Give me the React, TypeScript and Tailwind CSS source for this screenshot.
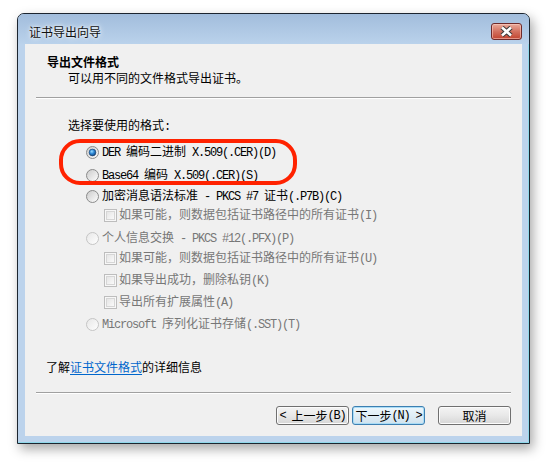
import { useId } from "react";

const ASCII = /^[\x20-\x7e]+$/;

// SimSun-like mix: Latin runs in a narrow mono, CJK in Noto
function Txt({ children }: { children: string }) {
  const parts = children.split(/([\x20-\x7e]+)/).filter(Boolean);
  return (
    <>
      {parts.map((p, i) =>
        ASCII.test(p) ? (
          <span key={i} className="font-['Liberation_Mono',monospace] tracking-[-1.2px] whitespace-pre">
            {p}
          </span>
        ) : (
          <span key={i}>{p}</span>
        ),
      )}
    </>
  );
}

function Radio({ checked, disabled }: { checked?: boolean; disabled?: boolean }) {
  const id = useId().replace(/[^a-zA-Z0-9]/g, "");
  return (
    <svg width="13" height="13" viewBox="0 0 13 13" className="shrink-0">
      <defs>
        <linearGradient id={`${id}f`} x1="0" y1="0" x2="1" y2="1">
          <stop offset="0" stopColor={disabled ? "#e6e6e6" : "#c9c9c9"} />
          <stop offset="1" stopColor="#ffffff" />
        </linearGradient>
        <radialGradient id={`${id}d`} cx="0.4" cy="0.35" r="0.75">
          <stop offset="0" stopColor="#9adcff" />
          <stop offset="0.45" stopColor="#2b86d6" />
          <stop offset="1" stopColor="#0b3568" />
        </radialGradient>
      </defs>
      <circle cx="6.5" cy="6.5" r="6" fill={`url(#${id}f)`} stroke={disabled ? "#c4c4c4" : "#8a8b8b"} />
      {checked && <circle cx="6.5" cy="6.5" r="3.4" fill={`url(#${id}d)`} stroke="#1b3f6b" strokeWidth="0.6" />}
    </svg>
  );
}

function Check({ disabled }: { disabled?: boolean }) {
  const id = useId().replace(/[^a-zA-Z0-9]/g, "");
  return (
    <svg width="13" height="13" viewBox="0 0 13 13" className="shrink-0">
      <defs>
        <linearGradient id={`${id}g`} x1="0" y1="0" x2="1" y2="1">
          <stop offset="0" stopColor={disabled ? "#e4e4e4" : "#d0d0d0"} />
          <stop offset="1" stopColor="#fbfbfb" />
        </linearGradient>
      </defs>
      <rect x="0.5" y="0.5" width="12" height="12" fill="#f7f7f7" stroke={disabled ? "#bdbdbd" : "#8f8f8f"} />
      <rect x="2.5" y="2.5" width="8" height="8" fill={`url(#${id}g)`} stroke={disabled ? "#d6d6d6" : "#b4b4b4"} />
    </svg>
  );
}

function RadioRow({ label, checked, disabled, className }: { label: string; checked?: boolean; disabled?: boolean; className: string }) {
  return (
    <div className={`flex h-[16px] items-center gap-[3px] pl-[61px] ${disabled ? "text-[#777777]" : "text-black"} ${className}`}>
      <Radio checked={checked} disabled={disabled} />
      <span className="whitespace-nowrap">
        <Txt>{label}</Txt>
      </span>
    </div>
  );
}

function CheckRow({ label, className }: { label: string; className: string }) {
  return (
    <div className={`flex h-[16px] items-center gap-[2px] pl-[79px] text-[#777777] ${className}`}>
      <Check disabled />
      <span className="whitespace-nowrap">
        <Txt>{label}</Txt>
      </span>
    </div>
  );
}

function Button({ label, primary, className = "" }: { label: string; primary?: boolean; className?: string }) {
  return (
    <button
      className={`flex h-[19px] w-[73px] items-center justify-center rounded-[3px] border bg-gradient-to-b leading-[16px] ${
        primary
          ? "border-[#3c7fb1] from-[#eef7fc] via-[#e0eef6] to-[#cfe2ee] shadow-[inset_0_0_0_1px_#a9dcf6]"
          : "border-[#707070] from-[#f4f4f4] via-[#e8e8e8] to-[#d6d6d6] shadow-[inset_0_0_0_1px_#fcfcfc]"
      } ${className}`}
    >
      <Txt>{label}</Txt>
    </button>
  );
}

function CloseButton() {
  return (
    <div className="ml-auto mt-[9px] flex h-[17px] w-[31px] items-center justify-center rounded-[3px] border border-[#6e2a2a] bg-gradient-to-b from-[#e9aa9b] via-[#d3705f] to-[#c2432f] shadow-[inset_0_0_0_1px_rgba(255,210,200,0.55)]">
      <svg width="15" height="11" viewBox="0 0 15 11">
        <path d="M3 1.5 L12 9.5 M12 1.5 L3 9.5" stroke="#3a3a3a" strokeWidth="4.6" />
        <path d="M3 1.5 L12 9.5 M12 1.5 L3 9.5" stroke="#ffffff" strokeWidth="2.6" />
      </svg>
    </div>
  );
}

export default function App() {
  return (
    <div className="h-[466px] w-[547px] bg-white pl-[17px] pt-[13px] font-['Noto_Sans_CJK_SC',sans-serif] text-[12px] text-black">
      <div className="flex h-[431px] w-[513px] flex-col overflow-hidden rounded-t-[7px] border border-[#1c2530] bg-[#bcd3ec] shadow-[3px_5px_12px_rgba(0,0,0,0.35),inset_-1px_-1px_0_#8fd8ea]">
        {/* title bar */}
        <div className="flex h-[30px] shrink-0 items-start bg-gradient-to-b from-[#a2bddc] to-[#bad2eb] pl-[11px] pr-[7px]">
          <span className="mt-[10px] leading-[16px] text-[#111] [text-shadow:0_0_6px_#ffffff,0_0_3px_#ffffff]">证书导出向导</span>
          <CloseButton />
        </div>

        {/* client area */}
        <div className="relative mx-[7px] flex h-[392px] shrink-0 flex-col bg-[#f0f0f0]">
          <div className="pl-[22px] pt-[10px] font-bold leading-[16px]">导出文件格式</div>
          <div className="pl-[43px] leading-[16px]">可以用不同的文件格式导出证书。</div>
          <div className="mx-[11px] mt-[11px] h-[2px] border-b border-t border-b-white border-t-[#a0a0a0]" />

          <div className="mt-[18px] pl-[43px] leading-[16px]">
            <Txt>选择要使用的格式:</Txt>
          </div>
          <RadioRow className="mt-[9px]" label="DER 编码二进制 X.509(.CER)(D)" checked />
          <RadioRow className="mt-[7px]" label="Base64 编码 X.509(.CER)(S)" />
          <RadioRow className="mt-[5px]" label="加密消息语法标准 - PKCS #7 证书(.P7B)(C)" />
          <CheckRow className="mt-[3px]" label="如果可能，则数据包括证书路径中的所有证书(I)" />
          <RadioRow className="mt-[7px]" label="个人信息交换 - PKCS #12(.PFX)(P)" disabled />
          <CheckRow className="mt-[4px]" label="如果可能，则数据包括证书路径中的所有证书(U)" />
          <CheckRow className="mt-[6px]" label="如果导出成功，删除私钥(K)" />
          <CheckRow className="mt-[6px]" label="导出所有扩展属性(A)" />
          <RadioRow className="mt-[6px]" label="Microsoft 序列化证书存储(.SST)(T)" disabled />

          <div className="mt-[27px] pl-[21px] leading-[16px]">
            了解<span className="text-[#0066cc] underline underline-offset-2">证书文件格式</span>的详细信息
          </div>
          <div className="mx-[11px] mt-[17px] h-[2px] border-b border-t border-b-white border-t-[#a0a0a0]" />

          <div className="mt-[12px] flex justify-end pr-[11px]">
            <Button label="< 上一步(B)" />
            <Button label="下一步(N) >" primary className="ml-[3px]" />
            <Button label="取消" className="ml-[13px]" />
          </div>

          {/* red annotation ring around the first two options */}
          <div className="pointer-events-none absolute left-[34px] top-[95px] h-[46px] w-[238px] rounded-[21px] border-[4px] border-[#ff2200]" />
        </div>
      </div>
    </div>
  );
}
